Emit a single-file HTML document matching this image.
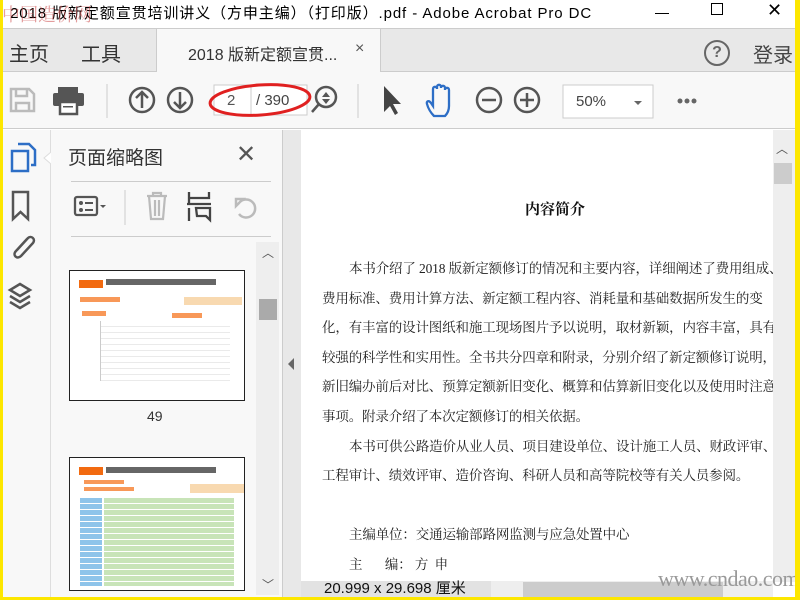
<!DOCTYPE html>
<html><head><meta charset="utf-8"><style>
*{margin:0;padding:0;box-sizing:border-box}
body{width:800px;height:600px;overflow:hidden;background:#fde700;font-family:"Liberation Sans","Noto Sans CJK SC",sans-serif;position:relative}
.a{position:absolute}
.ser{font-family:"Liberation Serif","Noto Serif CJK SC",serif}
</style></head><body>
<div class="a" style="left:3px;top:0;width:792px;height:597px;background:#fff;overflow:hidden">
<!-- title -->
<div class="a" style="left:0;top:0;width:792px;height:28px;background:#fff"></div>
<div class="a" style="left:2px;top:2px;font-size:15px;color:#000;white-space:nowrap;letter-spacing:0.9px">&nbsp;2018 版新定额宣贯培训讲义（方申主编）（打印版）.pdf - Adobe Acrobat Pro DC</div>
<div class="a" style="left:-1px;top:1px;font-size:18px;color:rgba(200,60,60,.5);font-family:'Noto Serif CJK SC',serif">中国造价网</div>
<div class="a" style="left:652px;top:13px;width:14px;height:1px;background:#000"></div>
<div class="a" style="left:708px;top:3px;width:12px;height:12px;border:1px solid #000"></div>
<div class="a" style="left:764px;top:0px;font-size:18px">✕</div>
<!-- tab bar -->
<div class="a" style="left:0;top:28px;width:792px;height:44px;background:#e8e8e8;border-top:1px solid #ccc;border-bottom:1px solid #ccc"></div>
<div class="a" style="left:6px;top:38px;font-size:20px;color:#333">主页</div>
<div class="a" style="left:78px;top:38px;font-size:20px;color:#333">工具</div>
<div class="a" style="left:153px;top:29px;width:225px;height:43px;background:#f8f8f8;border-left:1px solid #ccc;border-right:1px solid #ccc"></div>
<div class="a" style="left:185px;top:41px;font-size:16px;color:#333">2018 版新定额宣贯...</div>
<div class="a" style="left:352px;top:40px;font-size:16px;color:#555">×</div>
<div class="a" style="left:701px;top:40px;width:26px;height:26px;border:2.5px solid #666;border-radius:50%;text-align:center;font-size:16px;font-weight:bold;color:#666;line-height:21px">?</div>
<div class="a" style="left:750px;top:39px;font-size:20px;color:#444">登录</div>
<!-- toolbar -->
<div class="a" style="left:0;top:72px;width:792px;height:57px;background:#f8f8f8;border-bottom:1px solid #ccc"></div>
<svg class="a" style="left:0;top:72px" width="792" height="57">
<g fill="none" stroke="#bbb" stroke-width="2.5"><path d="M8 17h18l5 5v17H8z M13 17v7h11v-7 M13 39v-8h13v8"/></g>
<g fill="#555"><rect x="55" y="15" width="20" height="6"/><rect x="50" y="21" width="31" height="13" rx="2"/><rect x="57" y="30" width="17" height="12" fill="#fff" stroke="#555" stroke-width="2.5"/><rect x="60" y="34" width="10" height="1.5"/></g>
<line x1="104" y1="12" x2="104" y2="46" stroke="#ccc"/>
<g fill="none" stroke="#555" stroke-width="2.5"><circle cx="139" cy="28" r="12"/><path d="M139 36V20M133 26l6-6 6 6"/><circle cx="177" cy="28" r="12"/><path d="M177 20v16M171 30l6 6 6-6"/></g>
<rect x="211" y="13" width="93" height="30" fill="#fff" stroke="#ccc"/><line x1="248" y1="13" x2="248" y2="43" stroke="#ccc"/>
<g fill="none" stroke="#555" stroke-width="2.5"><circle cx="323" cy="25" r="10"/><path d="M316 32l-7 8"/></g>
<path d="M319 25l4-5 4 5zM319 27l4 5 4-5z" fill="#555"/>
<line x1="355" y1="12" x2="355" y2="46" stroke="#ccc"/>
<path d="M381 14v26l6-6 5 9 3-2-5-9h8z" fill="#444"/>
<path d="M431 44c-3-3-6-8-7-12-1-3 2-4 4-1l2 3V17c0-3 4-3 4 0v-2c0-3 4-3 4 0v1c0-3 4-3 4 0v2c0-3 4-3 4 0v16c0 5-2 8-4 10z" fill="none" stroke="#2d6ec6" stroke-width="2.3"/>
<g fill="none" stroke="#555" stroke-width="2.5"><circle cx="486" cy="28" r="12"/><path d="M479 28h14"/><circle cx="524" cy="28" r="12"/><path d="M517 28h14M524 21v14"/></g>
<rect x="560" y="13" width="90" height="33" fill="#fff" stroke="#ccc"/>
<path d="M631 29l4 4 4-4z" fill="#666"/>
<g fill="#666"><circle cx="677" cy="29" r="2.5"/><circle cx="684" cy="29" r="2.5"/><circle cx="691" cy="29" r="2.5"/></g>
<ellipse cx="257" cy="28" rx="50" ry="15" fill="none" stroke="#e02020" stroke-width="3" transform="rotate(-4 257 28)"/>
</svg>
<div class="a" style="left:224px;top:92px;font-size:15px;color:#555">2</div>
<div class="a" style="left:253px;top:92px;font-size:15px;color:#444">/ 390</div>
<div class="a" style="left:573px;top:93px;font-size:15px;color:#444">50%</div>
<!-- left rail & sidebar -->
<div class="a" style="left:0;top:130px;width:48px;height:467px;background:#f8f8f8;border-right:1px solid #ddd"></div>
<svg class="a" style="left:0;top:130px" width="300" height="190">
<g fill="none" stroke="#2d6ec6" stroke-width="2.5"><path d="M9 21h16v20H9z"/><path d="M15 14h11l6 6v15h-4"/></g>
<path d="M48 22l-7 6 7 6" fill="#fff" stroke="#ddd"/>
<g fill="none" stroke="#555" stroke-width="2.5"><path d="M10 62h15v27l-7.5-7-7.5 7z"/><path d="M24 109l-11 12c-4 4 1 9 5 5l12-13c3-4-2-8-5-5l-11 12"/><path d="M17 154l-10 6 10 6 10-6z M7 166l10 6 10-6 M7 172l10 6 10-6"/></g>
</svg>
<div class="a" style="left:48px;top:130px;width:234px;height:467px;background:#f8f8f8"></div>
<div class="a" style="left:65px;top:143px;font-size:19px;color:#333">页面缩略图</div>
<div class="a" style="left:233px;top:140px;font-size:24px;color:#555">✕</div>
<div class="a" style="left:68px;top:181px;width:200px;height:1px;background:#ccc"></div>
<div class="a" style="left:68px;top:236px;width:200px;height:1px;background:#ccc"></div>
<svg class="a" style="left:60px;top:185px" width="210" height="50">
<g fill="none" stroke="#555" stroke-width="2.3"><rect x="12" y="12" width="22" height="18" rx="2"/></g>
<g fill="#555"><circle cx="18" cy="18" r="2"/><circle cx="18" cy="25" r="2"/><rect x="22" y="17" width="8" height="2"/><rect x="22" y="24" width="8" height="2"/><path d="M37 20l3 3 3-3z"/></g>
<line x1="62" y1="5" x2="62" y2="40" stroke="#ccc"/>
<g fill="none" stroke="#bbb" stroke-width="2.2"><path d="M84 11h20M90 11v-3h8v3M86 11l2 23h12l2-23M92 15v16M96 15v16"/></g>
<g fill="none" stroke="#444" stroke-width="2.3"><path d="M126 7v6h20V7M126 13v6M124 19h24M126 23v13M133 23h14v12l-4-4h-9z"/></g>
<path d="M176 29a9 9 0 1 0 0-11l-3 3v-7h7l-3 3" fill="none" stroke="#bbb" stroke-width="2.5"/>
</svg>
<!-- sidebar scrollbar -->
<div class="a" style="left:253px;top:242px;width:23px;height:353px;background:#eee"></div>
<div class="a" style="left:256px;top:299px;width:18px;height:21px;background:#aaa"></div>
<div class="a" style="left:259px;top:244px;font-size:12px;color:#555">︿</div>
<div class="a" style="left:259px;top:576px;font-size:12px;color:#555">﹀</div>
<!-- thumbnails -->
<div class="a" style="left:66px;top:270px;width:176px;height:131px;background:#fff;border:1px solid #222;overflow:hidden">
<div class="a" style="left:9px;top:9px;width:24px;height:8px;background:#f26a10"></div>
<div class="a" style="left:36px;top:8px;width:110px;height:6px;background:#666"></div>
<div class="a" style="left:114px;top:26px;width:58px;height:8px;background:#f8d9b0"></div>
<div class="a" style="left:10px;top:26px;width:40px;height:5px;background:#f89858"></div>
<div class="a" style="left:12px;top:40px;width:24px;height:5px;background:#f89858"></div>
<div class="a" style="left:102px;top:42px;width:30px;height:5px;background:#f89858"></div>
<div class="a" style="left:30px;top:50px;width:130px;height:60px;border-left:1px solid #aaa;opacity:.6;background:repeating-linear-gradient(#fff 0 5px,#ddd 5px 6px)"></div>
</div>
<div class="a" style="left:144px;top:408px;font-size:14px;color:#333">49</div>
<div class="a" style="left:66px;top:457px;width:176px;height:134px;background:#fff;border:1px solid #222;overflow:hidden">
<div class="a" style="left:9px;top:9px;width:24px;height:8px;background:#f26a10"></div>
<div class="a" style="left:36px;top:9px;width:110px;height:6px;background:#666"></div>
<div class="a" style="left:14px;top:22px;width:40px;height:4px;background:#f89858"></div>
<div class="a" style="left:14px;top:29px;width:50px;height:4px;background:#f89858"></div>
<div class="a" style="left:120px;top:26px;width:54px;height:9px;background:#f8d9b0"></div>
<div class="a" style="left:10px;top:40px;width:22px;height:88px;background:repeating-linear-gradient(#8ec4ea 0 5px,#fff 5px 6px)"></div>
<div class="a" style="left:34px;top:40px;width:130px;height:88px;background:repeating-linear-gradient(#c8e4b8 0 5px,#fff 5px 6px)"></div>
</div>
<!-- doc area -->
<div class="a" style="left:279px;top:130px;width:19px;height:467px;background:#e8e8e8;border-left:1px solid #ccc"></div>
<div class="a" style="left:285px;top:358px;width:0;height:0;border-right:6px solid #666;border-top:6px solid transparent;border-bottom:6px solid transparent"></div>
<div class="a" style="left:298px;top:130px;width:472px;height:452px;background:#fff"></div>
<div class="a" style="left:770px;top:130px;width:22px;height:452px;background:#eee"></div>
<div class="a" style="left:771px;top:163px;width:18px;height:21px;background:#ccc"></div>
<div class="a" style="left:773px;top:140px;font-size:12px;color:#555">︿</div>
<div class="a ser" style="left:298px;top:198px;width:508px;text-align:center;font-size:15px;font-weight:bold;color:#111">内容简介</div>
<div class="a ser" style="left:319px;top:254px;width:451px;height:320px;overflow:hidden;font-size:13.5px;color:#222;letter-spacing:-0.15px;line-height:29.6px;white-space:nowrap">
<div style="padding-left:27px">本书介绍了 2018 版新定额修订的情况和主要内容，详细阐述了费用组成、</div>
<div>费用标准、费用计算方法、新定额工程内容、消耗量和基础数据所发生的变</div>
<div>化，有丰富的设计图纸和施工现场图片予以说明，取材新颖，内容丰富，具有</div>
<div>较强的科学性和实用性。全书共分四章和附录，分别介绍了新定额修订说明，</div>
<div>新旧编办前后对比、预算定额新旧变化、概算和估算新旧变化以及使用时注意</div>
<div>事项。附录介绍了本次定额修订的相关依据。</div>
<div style="padding-left:27px">本书可供公路造价从业人员、项目建设单位、设计施工人员、财政评审、</div>
<div>工程审计、绩效评审、造价咨询、科研人员和高等院校等有关人员参阅。</div>
<div>&nbsp;</div>
<div style="padding-left:27px">主编单位：交通运输部路网监测与应急处置中心</div>
<div style="padding-left:27px">主&nbsp;&nbsp;&nbsp;&nbsp;&nbsp;&nbsp;&nbsp;编：&nbsp;方&nbsp;&nbsp;申</div>
</div>
<!-- status -->
<div class="a" style="left:298px;top:581px;width:190px;height:16px;background:#e2e2e2"></div>
<div class="a" style="left:321px;top:580px;font-size:15px;color:#111;line-height:18px">20.999 x 29.698 厘米</div>
<div class="a" style="left:488px;top:581px;width:282px;height:16px;background:#eee"></div>
<div class="a" style="left:520px;top:582px;width:200px;height:15px;background:#ccc"></div>
<div class="a ser" style="left:655px;top:566px;font-size:22px;color:#999;letter-spacing:-0.5px">www.cndao.com</div>
</div>
</body></html>
